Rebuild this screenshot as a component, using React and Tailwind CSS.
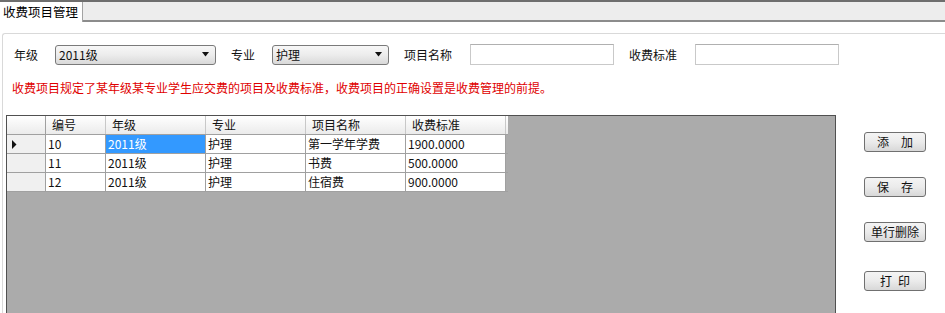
import React from "react";

const cols = [
  { key: "id", title: "编号", w: "w-[60px]" },
  { key: "grade", title: "年级", w: "w-[100px]" },
  { key: "major", title: "专业", w: "w-[100px]" },
  { key: "name", title: "项目名称", w: "w-[100px]" },
  { key: "fee", title: "收费标准", w: "w-[100px]" },
];

const rows = [
  { id: "10", grade: "2011级", major: "护理", name: "第一学年学费", fee: "1900.0000" },
  { id: "11", grade: "2011级", major: "护理", name: "书费", fee: "500.0000" },
  { id: "12", grade: "2011级", major: "护理", name: "住宿费", fee: "900.0000" },
];

function Caret() {
  return (
    <svg width="8" height="5" viewBox="0 0 8 5" className="shrink-0">
      <path d="M0 0 H7 L3.5 4.5 Z" fill="#111" />
    </svg>
  );
}

function Select({ value, w }) {
  return (
    <div
      className={`${w} h-[20px] flex items-center justify-between pl-[3px] pr-[5px] border border-[#7a7a7a] rounded-[3px] bg-gradient-to-b from-[#f7f7f7] via-[#ececec] to-[#d9d9d9] text-[#111]`}
    >
      <span className="leading-[18px]">{value}</span>
      <Caret />
    </div>
  );
}

function Input() {
  return <div className="w-[144px] h-[21px] border border-[#c9c9c9] border-t-[#b0b0b0] bg-white" />;
}

function Btn({ children, gap, mt }) {
  return (
    <div
      className={`${mt} w-[62px] h-[20px] flex items-center justify-center ${gap} border border-[#707070] rounded-[3px] bg-gradient-to-b from-[#f4f4f4] via-[#ebebeb] to-[#d8d8d8] text-[#111] leading-[18px]`}
    >
      {children}
    </div>
  );
}

export default function App() {
  return (
    <div className="w-[945px] h-[313px] overflow-hidden bg-white text-[12px] text-[#111] font-['Noto_Sans_CJK_SC',sans-serif]">
      {/* tab strip */}
      <div className="flex h-[22px] border-t-2 border-[#6e6e6e] bg-[#ededed]">
        <div className="w-[83px] bg-white border-r border-[#a3a3a3] pl-[3px] leading-[20px] text-[12.5px] text-black">
          收费项目管理
        </div>
        <div className="flex-1 border-b-2 border-[#8c8c8c]" />
      </div>

      {/* panel */}
      <div className="ml-[2px] mt-[11px] border-l border-t border-[#d9d9d9] rounded-tl-[3px] pb-[20px]">
        <div className="flex items-center pt-[10px] h-[31px]">
          <div className="w-[52px] pl-[11px]">年级</div>
          <Select value="2011级" w="w-[161px]" />
          <div className="w-[56px] pl-[15px]">专业</div>
          <Select value="护理" w="w-[117px]" />
          <div className="w-[81px] pl-[15px]">项目名称</div>
          <Input />
          <div className="w-[81px] pl-[15px]">收费标准</div>
          <Input />
        </div>

        <div className="mt-[15px] pl-[9px] leading-[16px] text-[#e00000]">
          收费项目规定了某年级某专业学生应交费的项目及收费标准，收费项目的正确设置是收费管理的前提。
        </div>

        <div className="flex mt-[19px]">
          {/* grid */}
          <div className="ml-[3px] w-[830px] h-[200px] border-l border-t border-r border-[#505050] bg-[#ababab]">
            {/* header */}
            <div className="flex h-[19px] w-[501px] bg-gradient-to-b from-[#ffffff] to-[#ebebeb] border-b border-[#a0a0a0]">
              <div className="w-[39px] border-r border-[#a0a0a0]" />
              {cols.map((c) => (
                <div
                  key={c.key}
                  className={`${c.w} border-r border-[#c8c8c8] pl-[6px] leading-[18px] text-[#111]`}
                >
                  {c.title}
                </div>
              ))}
            </div>
            {rows.map((r, i) => (
              <div key={r.id} className="flex h-[19px] w-[501px] border-b border-[#a0a0a0]">
                <div className="w-[39px] bg-[#f0f0f0] border-r border-[#a0a0a0] flex items-center pl-[5px]">
                  {i === 0 && (
                    <svg width="5" height="9" viewBox="0 0 5 9">
                      <path d="M0 0 L4.5 4.5 L0 9 Z" fill="#111" />
                    </svg>
                  )}
                </div>
                {cols.map((c) => {
                  const sel = i === 0 && c.key === "grade";
                  return (
                    <div
                      key={c.key}
                      className={`${c.w} border-r border-[#a0a0a0] pl-[2px] leading-[18px] ${
                        sel ? "bg-[#3399ff] text-white" : "bg-white text-[#111]"
                      }`}
                    >
                      {r[c.key]}
                    </div>
                  );
                })}
              </div>
            ))}
          </div>

          {/* buttons */}
          <div className="ml-[28px] flex flex-col">
            <Btn mt="mt-[17px]" gap="gap-[12px]">
              <span>添</span>
              <span>加</span>
            </Btn>
            <Btn mt="mt-[25px]" gap="gap-[12px]">
              <span>保</span>
              <span>存</span>
            </Btn>
            <Btn mt="mt-[25px]" gap="gap-0">
              <span>单行删除</span>
            </Btn>
            <Btn mt="mt-[29px]" gap="gap-[6px]">
              <span>打</span>
              <span>印</span>
            </Btn>
          </div>
        </div>
      </div>
    </div>
  );
}
